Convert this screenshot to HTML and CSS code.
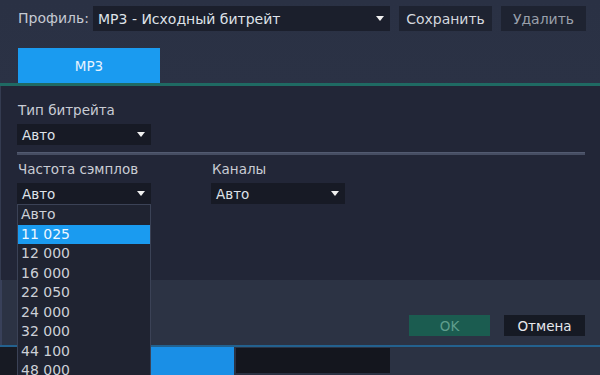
FILE: index.html
```html
<!DOCTYPE html>
<html lang="ru">
<head>
<meta charset="utf-8">
<link rel="stylesheet" href="styles.css">
</head>
<body>
<div class="app">
  <div class="topbar">
    <span class="label">Профиль:</span>
    <div class="select select-profile"><span>MP3 - Исходный битрейт</span><i class="arrow"></i></div>
    <button class="btn btn-dark">Сохранить</button>
    <button class="btn btn-dark btn-dim">Удалить</button>
  </div>
  <div class="tabs"><div class="tab">MP3</div></div>
  <div class="tabline"></div>
  <div class="panel">
    <div class="field">
      <div class="flabel">Тип битрейта</div>
      <div class="select small"><span>Авто</span><i class="arrow"></i></div>
    </div>
    <div class="sep"></div>
    <div class="row">
      <div class="field">
        <div class="flabel">Частота сэмплов</div>
        <div class="combo">
          <div class="select small"><span>Авто</span><i class="arrow"></i></div>
          <ul class="list">
            <li>Авто</li>
            <li class="sel">11 025</li>
            <li>12 000</li>
            <li>16 000</li>
            <li>22 050</li>
            <li>24 000</li>
            <li>32 000</li>
            <li>44 100</li>
            <li>48 000</li>
          </ul>
        </div>
      </div>
      <div class="field">
        <div class="flabel">Каналы</div>
        <div class="select small"><span>Авто</span><i class="arrow"></i></div>
      </div>
    </div>
  </div>
  <div class="footer">
    <button class="btn btn-ok">OK</button>
    <button class="btn btn-cancel">Отмена</button>
  </div>
  <div class="strip">
    <div class="s-left"></div>
    <div class="s-gap"></div>
    <div class="s-blue"></div>
    <div class="s-black"></div>
  </div>
</div>
</body>
</html>
```
FILE: styles.css
```css
* { box-sizing: border-box; margin: 0; padding: 0; }
html, body { width: 600px; height: 375px; overflow: hidden; }
body { background: #2b3245; font-family: "DejaVu Sans", Verdana, sans-serif; font-size: 13.5px; color: #d0d3da; }
.app { width: 600px; height: 375px; display: flex; flex-direction: column; background: linear-gradient(#2a3144, #2e3548); }

.topbar { height: 37px; display: flex; align-items: flex-start; padding: 6px 14px 0 18px; font-size: 14px; }
.label { line-height: 25px; color: #c6cad3; width: 75px; }
.select { display: flex; align-items: center; justify-content: space-between; background: #1b1f2c; color: #dfe2e8; }
.select-profile { width: 297px; height: 25px; padding: 0 6px 0 5px; margin-right: 9px; }
.arrow { width: 0; height: 0; border-left: 4px solid transparent; border-right: 4px solid transparent; border-top: 5px solid #f0f0f0; }
.btn { font-family: "DejaVu Sans", Verdana, sans-serif; font-size: 14px; border: 0; height: 25px; }
.btn-dark { background: #1e2331; color: #d4d7de; padding: 0 6px; margin-right: 9px; width: 93px; }
.btn-dim { color: #9aa0ab; width: 85px; margin-right: 0; }

.tabs { height: 46px; padding: 11px 0 0 18px; display: flex; }
.tab { width: 142px; height: 35px; background: #1a9bf0; color: #e6f3ff; display: flex; align-items: center; justify-content: center; font-size: 13.5px; }
.tabline { height: 3px; background: #1f6a63; }

.panel { height: 194px; background: #222637; padding: 14px 15px 0 16px; border-left: 1px solid #343b50; }
.field { display: flex; flex-direction: column; }
.flabel { height: 24px; line-height: 20px; color: #c9ccd4; padding-left: 1px; }
.small { width: 134px; height: 21px; background: #171a25; padding: 0 6px 0 5px; }
.sep { height: 3px; background: #464d62; margin: 7px 0 4px 0; border-top: 1px solid #525a70; }
.row { display: flex; gap: 60px; }
.combo { position: relative; }
.list { position: absolute; left: 0; top: 21px; width: 134px; height: 200px; background: #1f2331; border: 1px solid #3b4256; list-style: none; z-index: 5; }
.list li { height: 19.5px; line-height: 19.5px; padding-left: 3px; color: #cdd0d7; font-size: 14px; }
.list li.sel { background: #1a9bf0; color: #eef7ff; }

.footer { height: 65px; display: flex; justify-content: flex-end; align-items: flex-start; padding: 35px 15px 0 0; gap: 14px; background: #2c3344; border-left: 2px solid #39415a; }
.btn-ok { width: 81px; height: 21px; background: #1b5c50; color: #5f9e8d; font-size: 13.5px; }
.btn-cancel { width: 81px; height: 21px; background: #161a24; color: #e6e8ec; font-size: 13.5px; }

.strip { flex: 1; display: flex; align-items: stretch; border-top: 2px solid #23618e; background: #2b3243; }
.s-left { width: 17px; background: #171a23; }
.s-gap { width: 133px; }
.s-blue { width: 84px; background: #1a8fe6; }
.s-black { width: 154px; background: #14161e; margin: 1px 0 2px 2px; }
```
